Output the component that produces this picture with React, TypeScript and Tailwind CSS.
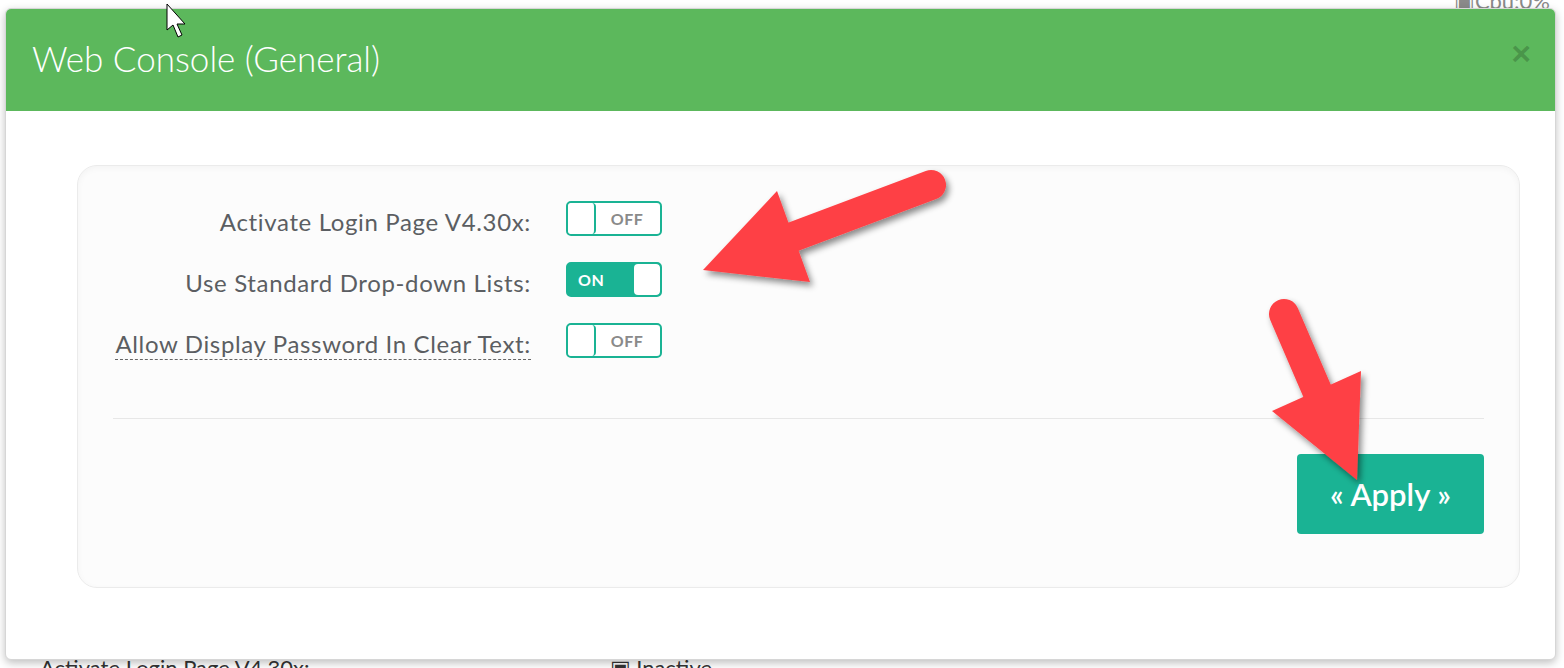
import React, { useState } from 'react'

const font = { fontFamily: 'Lato, "Open Sans", sans-serif' }

type ToggleProps = { on: boolean; onChange: () => void }

const Toggle = ({ on, onChange }: ToggleProps) => (
  <button
    onClick={onChange}
    className={`flex h-[35px] w-[96px] items-stretch overflow-hidden rounded-[5px] border-2 border-[#1ab394] ${
      on ? 'bg-[#1ab394]' : 'bg-white'
    }`}
  >
    {on ? (
      <>
        <span className="flex flex-1 items-center pl-[10px] text-[16px] font-bold tracking-[0.5px] text-white">ON</span>
        <span className="w-[26px] rounded-[4px] bg-white" />
      </>
    ) : (
      <>
        <span className="w-[28px] rounded-[4px] border-r-2 border-[#1ab394] bg-white" />
        <span className="flex flex-1 items-center justify-center pr-[2px] text-[16px] font-bold tracking-[0.5px] text-[#8a8a8a]">OFF</span>
      </>
    )}
  </button>
)

const settings = [
  { label: 'Activate Login Page V4.30x:', on: false, help: false },
  { label: 'Use Standard Drop-down Lists:', on: true, help: false },
  { label: 'Allow Display Password In Clear Text:', on: false, help: true },
]

export default function App() {
  const [values, setValues] = useState(settings.map((s) => s.on))

  return (
    <div className="relative h-[668px] w-[1564px] overflow-hidden bg-white" style={font}>
      {/* page behind the dialog */}
      <div className="flex h-full flex-col justify-between">
        <div className="flex justify-end pr-[14px] text-[22px] leading-[14px] text-[#8a8a8a]">
          <span className="-mt-[6px]">▣Cpu:0%</span>
        </div>
        <div className="flex items-end gap-[300px] pl-[40px] text-[22px] leading-[16px] text-[#333]">
          <span className="-mb-[8px]">Activate Login Page V4.30x:</span>
          <span className="-mb-[8px]">▣ Inactive</span>
        </div>
      </div>

      {/* dialog */}
      <div className="absolute left-[5px] top-[8px] flex h-[652px] w-[1551px] flex-col overflow-hidden rounded-[6px] border border-[#d6d6d6] bg-white shadow-[0_3px_9px_rgba(0,0,0,0.25)]">
        <div className="flex h-[102px] shrink-0 items-center justify-between bg-[#5cb85c] pl-[26px] pr-[24px]">
          <h1 className="-mt-[3px] text-[35px] font-light text-white">Web Console (General)</h1>
          <button className="-mt-[14px] text-[34px] font-bold leading-none text-black/20" style={{ fontFamily: '"Liberation Sans", sans-serif' }}>
            ×
          </button>
        </div>

        <div className="pl-[71px] pr-[35px] pt-[54px]">
          <div className="rounded-[20px] border border-[#ebebeb] bg-[#fcfcfc] px-[35px] pb-[53px] pt-[22px] shadow-[inset_0_2px_6px_rgba(0,0,0,0.04)]">
            {settings.map((s, i) => (
              <div key={s.label} className="flex h-[61px] items-center gap-[35px]">
                <span className="w-[418px] pt-[6px] text-right text-[24px] tracking-[0.65px] text-[#5b5e62]">
                  <span className={s.help ? 'underline decoration-[#666] decoration-dashed decoration-1 underline-offset-[6px]' : ''}>{s.label}</span>
                </span>
                <Toggle
                  on={values[i]}
                  onChange={() => setValues((v) => v.map((x, j) => (j === i ? !x : x)))}
                />
              </div>
            ))}
            <div className="mt-[47px] border-t border-[#e7e7e7]" />
            <div className="mt-[35px] flex justify-end">
              <button className="h-[80px] w-[187px] rounded-[4px] bg-[#1ab394] text-[31px] font-semibold text-white">
                « Apply »
              </button>
            </div>
          </div>
        </div>
      </div>

      {/* annotation arrows and cursor */}
      <svg className="pointer-events-none absolute left-0 top-0" width="1564" height="668">
        <defs>
          <filter id="sh" x="-20%" y="-20%" width="140%" height="140%">
            <feDropShadow dx="3" dy="4" stdDeviation="3" floodColor="#000" floodOpacity="0.45" />
          </filter>
        </defs>
        <g filter="url(#sh)" fill="#fe4145" stroke="#fe4145">
          <line x1="931" y1="185" x2="790" y2="238" strokeWidth="30" strokeLinecap="round" />
          <polygon points="777,191 703,270 810,282" stroke="none" />
          <line x1="1284" y1="314" x2="1318" y2="393" strokeWidth="30" strokeLinecap="round" />
          <polygon points="1272,411 1361,371 1357,480" stroke="none" />
        </g>
        <polygon
          points="167,4 167,30 173,25 178,37 182,35 177,24 185,24"
          fill="#fff"
          stroke="#000"
          strokeWidth="1"
        />
      </svg>
    </div>
  )
}
